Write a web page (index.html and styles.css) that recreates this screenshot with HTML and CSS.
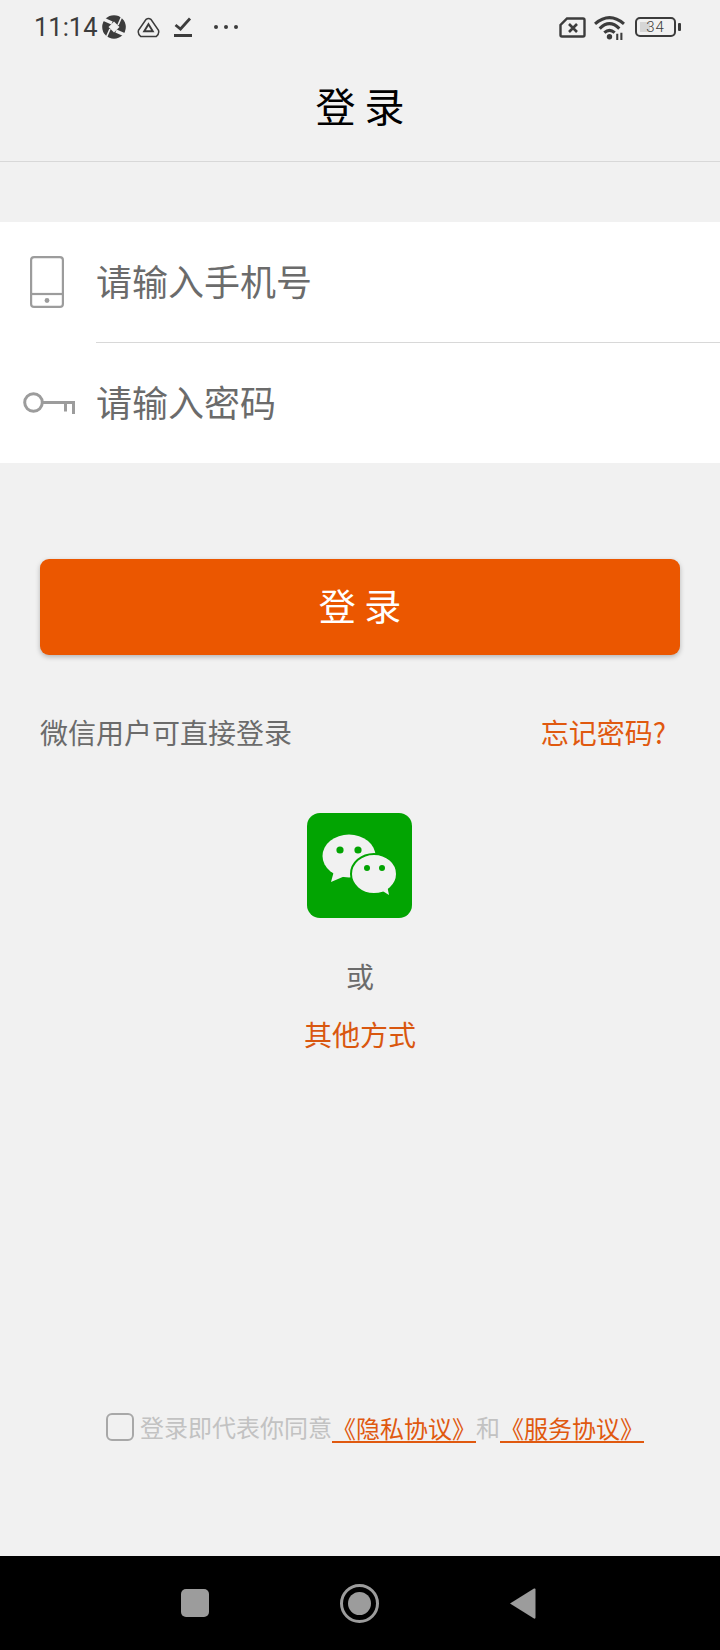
FILE: index.html
```html
<!DOCTYPE html>
<html lang="zh-CN">
<head>
  <meta charset="UTF-8" />
  <meta name="viewport" content="width=device-width, initial-scale=1.0"/>
  <title>登录</title>
  <link rel="stylesheet" href="styles.css">
</head>
<body>
  <div class="page">

    <div class="status-bar">
      <div class="status-left">
        <span class="time">11:14</span>
        <svg class="ic-ball" viewBox="0 0 24 24"><circle cx="12" cy="12" r="11.8" fill="#3c3c3c"/><path d="M12 6.5 L17.5 12 L12 17.5 L6.5 12Z" fill="#f1f1f1"/><path d="M10 8 L1 4 M14 16 L23 20" stroke="#f1f1f1" stroke-width="3.4" fill="none"/><path d="M16 10 L20 1 M8 14 L4 23" stroke="#f1f1f1" stroke-width="1.6" fill="none"/></svg>
        <svg class="ic-tri" viewBox="0 0 24 22" fill="none" stroke="#3c3c3c"><path d="M9.5 2.5 Q12 0.5 14.5 2.5 L22.5 14 Q23.5 18 20 20.5 L4 20.5 Q0.5 18 1.5 14Z" stroke-width="1.6"/><path d="M12 7.5 L16.5 15 L7.5 15Z" stroke-width="2"/></svg>
        <svg class="ic-check" viewBox="0 0 18 22" fill="none" stroke="#3c3c3c"><path d="M1.5 9 L6.5 13 L16 2.5" stroke-width="2.8"/><path d="M0 19.5 H18" stroke-width="3"/></svg>
        <span class="dots"><i></i><i></i><i></i></span>
      </div>
      <div class="status-right">
        <svg class="ic-sim" viewBox="0 0 27 21"><path d="M8 1.5 H24 Q25.5 1.5 25.5 3 V18 Q25.5 19.5 24 19.5 H3 Q1.5 19.5 1.5 18 V8Z" fill="none" stroke="#3c3c3c" stroke-width="2.4"/><path d="M10 7 L18 15 M18 7 L10 15" stroke="#3c3c3c" stroke-width="2.6"/></svg>
        <svg class="ic-wifi" viewBox="0 0 30 24" fill="none" stroke="#3c3c3c"><path d="M1 8.5 Q15 -3.5 29 8.5" stroke-width="3"/><path d="M5.5 13 Q15 3.5 24.5 13" stroke-width="3"/><path d="M10 17 Q15 12.5 20 17" stroke-width="3"/><circle cx="15" cy="21" r="2.6" fill="#3c3c3c" stroke="none"/><path d="M22.5 18 V24 M26.5 17 V24" stroke-width="2"/></svg>
        <div class="battery">
          <div class="battery-body"><span class="battery-fill"></span><span class="battery-num">34</span></div>
          <span class="battery-tip"></span>
        </div>
      </div>
    </div>

    <div class="title-bar">登 录</div>

    <div class="form-card">
      <div class="form-row">
        <div class="row-icon">
          <svg class="ic-phone" viewBox="0 0 34 52" fill="none" stroke="#9c9c9c" stroke-width="2.2"><rect x="1.1" y="1.1" width="31.8" height="49.8" rx="3"/><path d="M1 38 H33"/><circle cx="17" cy="44.5" r="2.4" fill="#9c9c9c" stroke="none"/></svg>
        </div>
        <span class="row-text">请输入手机号</span>
      </div>
      <div class="form-row form-row-line">
        <div class="row-icon">
          <svg class="ic-key" viewBox="0 0 52 22" fill="none" stroke="#9c9c9c" stroke-width="3"><circle cx="10.5" cy="10.5" r="8.8"/><path d="M19 10.5 H50.5 V22 M42.5 10.5 V19.5"/></svg>
        </div>
        <span class="row-text">请输入密码</span>
      </div>
    </div>

    <div class="login-btn">登 录</div>

    <div class="hint-row">
      <span class="hint">微信用户可直接登录</span>
      <span class="forgot">忘记密码?</span>
    </div>

    <div class="wechat-box">
      <svg class="ic-wechat" viewBox="0 0 105 105">
        <rect width="105" height="105" rx="13" fill="#02a402"/>
        <path d="M27 58 L24 69 L38 63Z" fill="#f1f1f1"/>
        <ellipse cx="42" cy="43" rx="26.5" ry="21.5" fill="#f1f1f1"/>
        <circle cx="33" cy="37" r="3.6" fill="#02a402"/>
        <circle cx="51" cy="37" r="3.6" fill="#02a402"/>
        <ellipse cx="67" cy="61" rx="23" ry="20" fill="#f1f1f1" stroke="#02a402" stroke-width="2"/>
        <path d="M74 77 L82 82 L80 72Z" fill="#f1f1f1"/>
        <circle cx="60" cy="55" r="3" fill="#02a402"/>
        <circle cx="75" cy="55" r="3" fill="#02a402"/>
      </svg>
    </div>

    <div class="or">或</div>
    <div class="other">其他方式</div>

    <div class="agree">
      <span class="checkbox"></span>
      <span class="agree-text">登录即代表你同意</span><a class="agree-link">《隐私协议》</a><span class="agree-text">和</span><a class="agree-link">《服务协议》</a>
    </div>

    <div class="nav-bar">
      <span class="nav-square"></span>
      <span class="nav-home"><i></i></span>
      <svg class="nav-back" viewBox="0 0 27 33"><path d="M1 16.5 L25 1.5 Q26.5 1 26.5 2.5 V30.5 Q26.5 32 25 31.5Z" fill="#9c9c9c"/></svg>
    </div>

  </div>
</body>
</html>
```

FILE: styles.css
```css
* {
  box-sizing: border-box;
  font-family: "Noto Sans CJK SC", "Noto Sans", sans-serif;
}
html, body {
  margin: 0;
  padding: 0;
}
body {
  background-color: #f1f1f1;
}
.page {
  width: 720px;
  height: 1650px;
  display: flex;
  flex-direction: column;
  overflow: hidden;
}

/* status bar */
.status-bar {
  height: 54px;
  flex: none;
  padding: 0 39px 0 34px;
  display: flex;
  align-items: center;
  justify-content: space-between;
}
.status-left, .status-right {
  display: flex;
  align-items: center;
}
.time {
  font-family: Roboto, sans-serif;
  font-size: 25.5px;
  color: #3c3c3c;
  width: 68px;
}
.ic-ball {
  width: 24px;
  height: 24px;
  margin-right: 11px;
}
.ic-tri {
  width: 23px;
  height: 21px;
  margin-right: 14px;
}
.ic-check {
  width: 18px;
  height: 22px;
  margin-right: 22px;
}
.dots {
  display: flex;
  gap: 6px;
}
.dots i {
  width: 4px;
  height: 4px;
  border-radius: 50%;
  background: #3c3c3c;
}
.ic-sim {
  width: 27px;
  height: 21px;
  margin-right: 8px;
}
.ic-wifi {
  width: 31px;
  height: 25px;
  margin-right: 10px;
}
.battery {
  display: flex;
  align-items: center;
  gap: 2px;
}
.battery-body {
  width: 41px;
  height: 20px;
  border: 2px solid #3c3c3c;
  border-radius: 5px;
  position: relative;
  text-align: center;
}
.battery-fill {
  position: absolute;
  left: 3px;
  top: 3px;
  bottom: 3px;
  width: 10px;
  background: #d6d6d6;
}
.battery-num {
  position: relative;
  display: block;
  font-family: Roboto, sans-serif;
  font-size: 15px;
  font-weight: 300;
  line-height: 16px;
  color: #3c3c3c;
  letter-spacing: 1px;
}
.battery-tip {
  width: 3px;
  height: 8px;
  border-radius: 1px;
  background: #3c3c3c;
}

/* title */
.title-bar {
  height: 108px;
  flex: none;
  padding-bottom: 6px;
  display: flex;
  align-items: center;
  justify-content: center;
  font-size: 40px;
  color: #000;
  border-bottom: 1px solid #d8d8d8;
}

/* form */
.form-card {
  margin-top: 60px;
  background: #fff;
  flex: none;
}
.form-row {
  height: 120px;
  display: flex;
  align-items: center;
}
.form-row-line {
  height: 121px;
  position: relative;
}
.form-row-line::before {
  content: "";
  position: absolute;
  left: 96px;
  right: 0;
  top: 0;
  height: 1px;
  background: #d8d8d8;
}
.row-icon {
  width: 96px;
  flex: none;
  display: flex;
  justify-content: center;
  padding-right: 2px;
}
.ic-phone {
  width: 34px;
  height: 52px;
}
.ic-key {
  width: 52px;
  height: 22px;
  margin-left: 3px;
}
.row-text {
  font-size: 36px;
  line-height: 1;
  color: #6b6b6b;
  margin-top: -4px;
}

/* button */
.login-btn {
  margin: 96px 40px 0;
  height: 96px;
  padding-bottom: 4px;
  flex: none;
  border-radius: 9px;
  background-color: #eb5700;
  box-shadow: 0 2px 5px rgba(0,0,0,0.25);
  color: #fff;
  font-size: 37px;
  display: flex;
  align-items: center;
  justify-content: center;
}

.hint-row {
  margin: 57px 54px 0 40px;
  display: flex;
  justify-content: space-between;
  align-items: center;
  font-size: 28px;
  line-height: 40px;
}
.hint {
  color: #6b6b6b;
}
.forgot {
  color: #e0590f;
}

.wechat-box {
  margin-top: 61px;
  padding-right: 2px;
  display: flex;
  justify-content: center;
}
.ic-wechat {
  width: 105px;
  height: 105px;
}
.or {
  margin-top: 38px;
  text-align: center;
  font-size: 28px;
  line-height: 40px;
  color: #6b6b6b;
}
.other {
  margin-top: 18px;
  text-align: center;
  font-size: 28px;
  line-height: 40px;
  color: #d9570f;
}

/* agreement */
.agree {
  margin-top: auto;
  margin-bottom: 112px;
  padding-left: 106px;
  display: flex;
  align-items: center;
  font-size: 24px;
  line-height: 34px;
}
.checkbox {
  width: 28px;
  height: 28px;
  margin-right: 6px;
  border: 2px solid #a8a8a8;
  border-radius: 6px;
}
.agree-text {
  color: #c2c2c2;
}
.agree-link {
  color: #e0590f;
  border-bottom: 2px solid #e0590f;
  line-height: 34px;
  height: 32px;
}

/* navigation */
.nav-bar {
  height: 94px;
  flex: none;
  background: #000;
  display: flex;
  align-items: center;
  padding: 0 0 0 181px;
}
.nav-square {
  width: 28px;
  height: 28px;
  border-radius: 5px;
  background: #9c9c9c;
  margin-right: 131px;
}
.nav-home {
  width: 39px;
  height: 39px;
  border: 3px solid #9c9c9c;
  border-radius: 50%;
  display: flex;
  align-items: center;
  justify-content: center;
  margin-right: 130px;
}
.nav-home i {
  width: 23px;
  height: 23px;
  border-radius: 50%;
  background: #9c9c9c;
}
.nav-back {
  width: 27px;
  height: 33px;
}
```
